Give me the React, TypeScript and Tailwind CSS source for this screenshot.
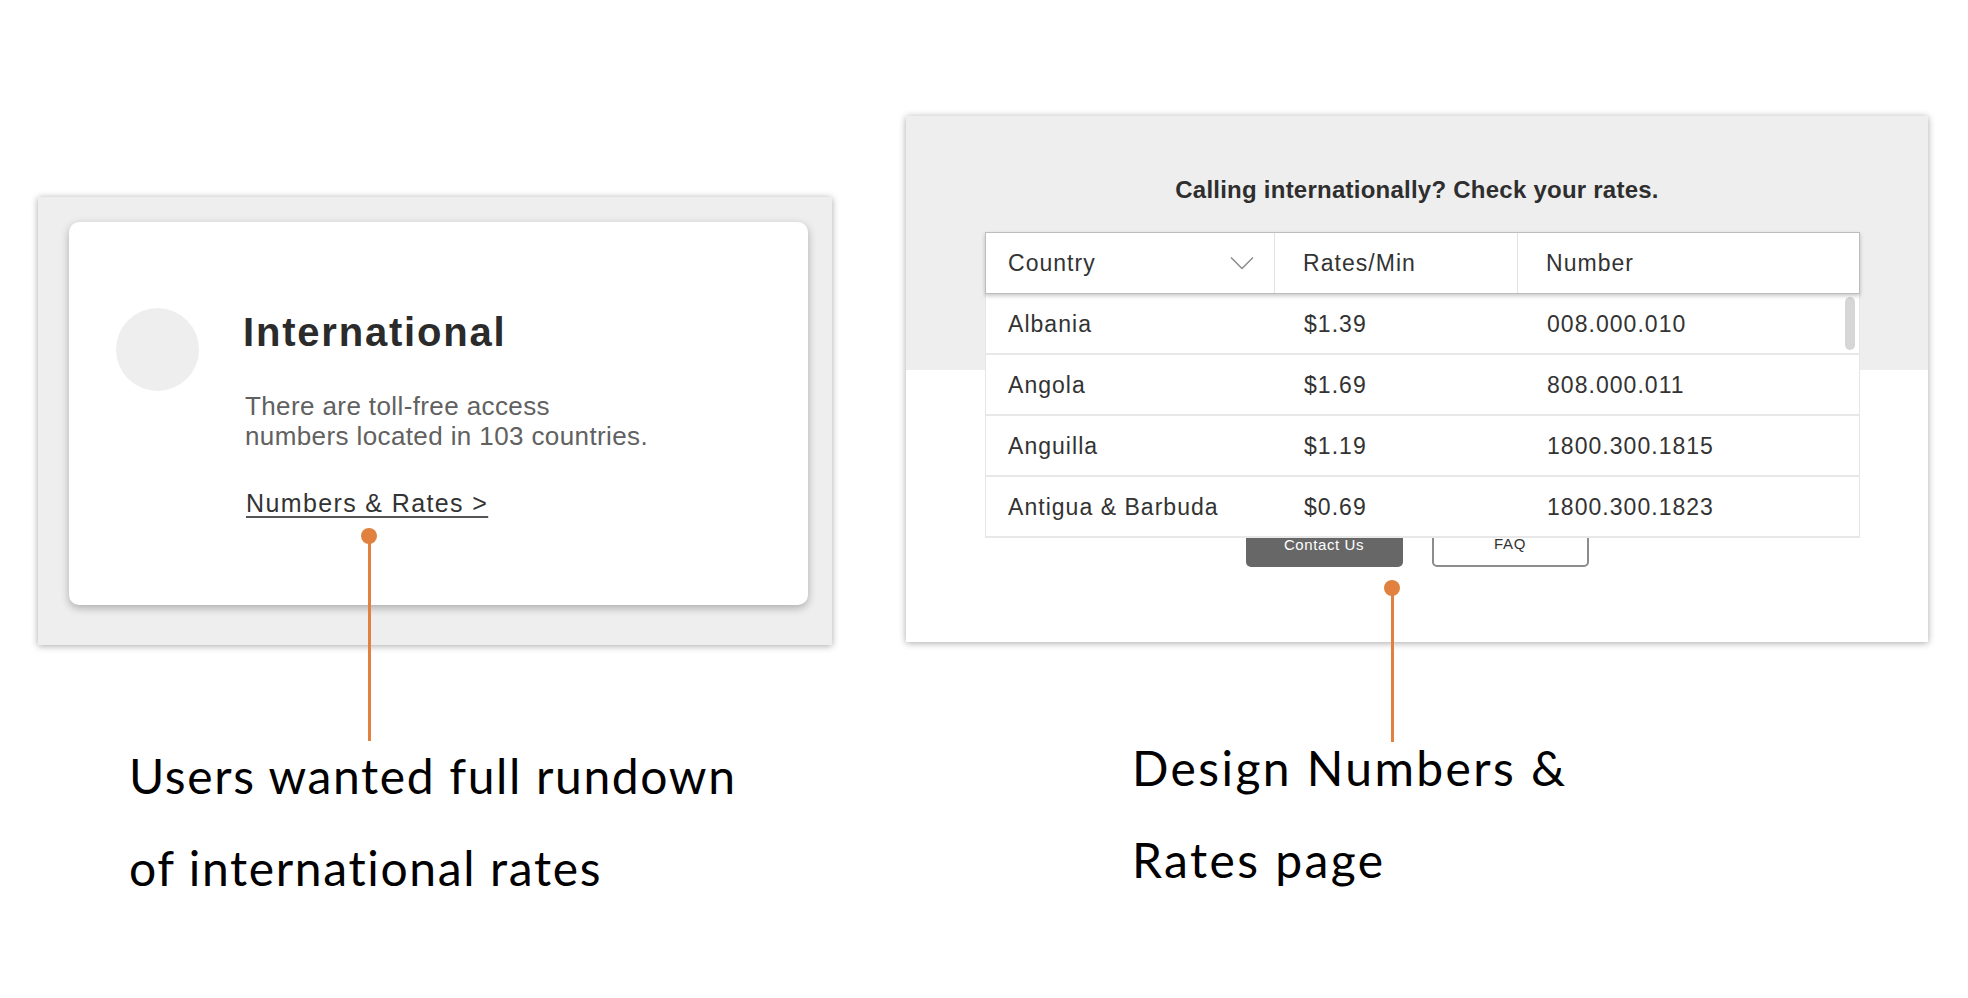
const RATES = [
  { country: 'Albania', rate: '$1.39', number: '008.000.010' },
  { country: 'Angola', rate: '$1.69', number: '808.000.011' },
  { country: 'Anguilla', rate: '$1.19', number: '1800.300.1815' },
  { country: 'Antigua & Barbuda', rate: '$0.69', number: '1800.300.1823' },
]

const helv = "font-['Liberation_Sans',Arial,sans-serif]"
const caption = "font-['Lato','Open_Sans',sans-serif] text-[48px] leading-[92px] text-black"

export default function App() {
  return (
    <div className="relative h-[998px] w-[1968px] overflow-hidden bg-white">
      <div className="flex items-start pl-[38px]">
        <div className="w-[794px] pt-[197px]">
          <InternationalCard />
          <p className={`${caption} mt-[85px] pl-[91px] tracking-[0.034em]`}>
            Users wanted full rundown
            <br />
            of international rates
          </p>
        </div>

        <div className="ml-[74px] w-[1022px] pt-[116px]">
          <RatesPanel />
          <p className={`${caption} mt-[80px] pl-[226px] tracking-[0.05em]`}>
            Design Numbers &amp;
            <br />
            Rates page
          </p>
        </div>
      </div>

      {/* annotation pins */}
      <Pin x={369} y={536} bottom={741} />
      <Pin x={1392} y={588} bottom={742} />
    </div>
  )
}

function Pin({ x, y, bottom }: { x: number; y: number; bottom: number }) {
  return (
    <>
      <div className="absolute w-[3px] bg-[#e0813f]" style={{ left: x - 1, top: y, height: bottom - y }} />
      <div className="absolute h-[16px] w-[16px] rounded-full bg-[#e0813f]" style={{ left: x - 8, top: y - 8 }} />
    </>
  )
}

function InternationalCard() {
  return (
    <div className="h-[448px] bg-[#eeeeee] px-[31px] pt-[25px] shadow-[0_1px_7px_rgba(0,0,0,0.35)]">
      <div className={`${helv} flex h-[383px] w-[739px] rounded-[10px] bg-white shadow-[0_3px_8px_rgba(0,0,0,0.28)]`}>
        <div className="ml-[47px] mt-[86px] h-[83px] w-[83px] shrink-0 rounded-full bg-[#eeeeee]" />
        <div className="ml-[44px] mt-[86px] flex flex-col">
          <h2 className="text-[40px] font-bold leading-[48px] tracking-[0.045em] text-[#2b2b2b]">International</h2>
          <p className="ml-[2px] mt-[35px] text-[26px] leading-[30px] tracking-[0.015em] text-[#616161]">
            There are toll-free access
            <br />
            numbers located in 103 countries.
          </p>
          <a className="ml-[3px] mt-[37px] self-start text-[25px] leading-[30px] tracking-[0.055em] text-[#333] underline decoration-[#555] decoration-2 underline-offset-[4px]">
            Numbers &amp; Rates &gt;
          </a>
        </div>
      </div>
    </div>
  )
}

function Chevron() {
  return (
    <svg width="24" height="14" viewBox="0 0 24 14" fill="none" className="text-[#8a8a8a]">
      <path d="M1 1.5 L12 12.5 L23 1.5" stroke="currentColor" strokeWidth="1.5" />
    </svg>
  )
}

function RatesPanel() {
  return (
    <div
      className={`${helv} h-[526px] bg-[linear-gradient(to_bottom,#eeeeee_254px,#ffffff_254px)] pt-[59px] shadow-[0_1px_7px_rgba(0,0,0,0.35)]`}
    >
      <h3 className="text-center text-[24px] font-bold leading-[30px] tracking-[0.01em] text-[#2e2e2e]">
        Calling internationally? Check your rates.
      </h3>

      <div className="relative z-10 ml-[79px] mt-[27px] w-[875px] text-[23px] tracking-[0.045em] text-[#333]">
        <div className="relative z-10 grid h-[62px] grid-cols-[289px_243px_1fr] border border-[#bdbdbd] bg-white shadow-[0_2px_4px_rgba(0,0,0,0.22)]">
          <div className="flex items-center justify-between border-r border-[#e2e2e2] pl-[22px] pr-[20px]">
            <span>Country</span>
            <Chevron />
          </div>
          <div className="flex items-center border-r border-[#e2e2e2] pl-[28px]">Rates/Min</div>
          <div className="flex items-center pl-[28px]">Number</div>
        </div>

        <div className="relative border-x border-[#e6e6e6] bg-white">
          {RATES.map((r) => (
            <div key={r.country} className="grid h-[61px] grid-cols-[289px_243px_1fr] items-center border-b-2 border-[#e8e8e8] pt-[2px]">
              <span className="pl-[22px]">{r.country}</span>
              <span className="pl-[29px]">{r.rate}</span>
              <span className="pl-[29px]">{r.number}</span>
            </div>
          ))}
          <div className="absolute right-[4px] top-[3px] h-[53px] w-[10px] rounded-full bg-[#d6d6d6]" />
        </div>
      </div>

      <div className="relative z-0 -mt-[17px] flex justify-center gap-[29px] text-[15px] tracking-[0.04em]">
        <button type="button" className="h-[46px] w-[157px] rounded-[5px] bg-[#676767] pt-[2px] text-white">
          Contact Us
        </button>
        <button type="button" className="h-[46px] w-[157px] rounded-[5px] border-2 border-[#8c8c8c] bg-white text-[#333]">
          FAQ
        </button>
      </div>
    </div>
  )
}
